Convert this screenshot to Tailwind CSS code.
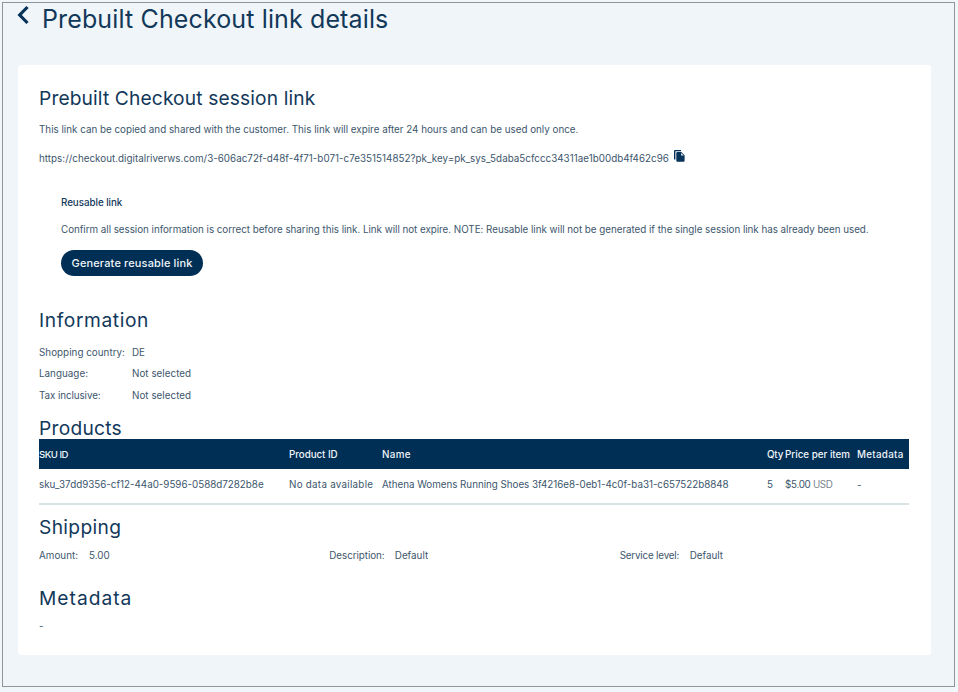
<!DOCTYPE html>
<html lang="en">
<head>
<meta charset="utf-8">
<title>Prebuilt Checkout link details</title>
<script src="https://cdn.jsdelivr.net/npm/@tailwindcss/browser@4"></script>
</head>
<body class="h-[692px] overflow-hidden bg-[#f0f6f9] pt-[2px] pl-[2px] font-['Inter',sans-serif] text-[9.8px] leading-4 text-[#3c566c]">
<div class="h-[685px] w-[953px] border border-[#8f9599] bg-[#eff5f8]">
  <header class="flex h-[62px] items-start pl-[13px] text-[#12385a]">
    <svg class="mt-[2px] h-[20px] w-[13px]" viewBox="0 0 13 20" fill="none" stroke="#073259" stroke-width="3.2"><path d="M11.500 2 3.700 10l7.800 8"/></svg>
    <h1 class="ml-[13px] h-8 text-[25px] leading-8 tracking-[0.13px] whitespace-nowrap">Prebuilt Checkout link details</h1>
  </header>
  <main class="ml-[15px] flex h-[590px] w-[913px] flex-col rounded-[3px] bg-white px-[21px] pt-[19px] whitespace-nowrap">
    <h2 class="h-7 text-[19.2px] leading-7 tracking-[0.13px] text-[#12385a]">Prebuilt Checkout session link</h2>
    <p class="mt-[10px] tracking-[0.01px]">This link can be copied and shared with the customer. This link will expire after 24 hours and can be used only once.</p>
    <div class="mt-[13px] flex h-4 items-start">
      <span class="w-[635px] tracking-[0.03px]">https://checkout.digitalriverws.com/3-606ac72f-d48f-4f71-b071-c7e351514852?pk_key=pk_sys_5daba5cfccc34311ae1b00db4f462c96</span>
      <svg class="-mt-px h-[12px] w-[11px]" viewBox="0 0 11 12" fill="#073259"><path d="M0 1a1 1 0 0 1 1-1h6v1.200H1.400V9.500H0z"/><path d="M2.300 3a1 1 0 0 1 1-1h4l3.300 3.300V10.800a1 1 0 0 1-1 1H3.300a1 1 0 0 1-1-1z"/><path fill="#fff" d="M7.200 3v2.500h2.500z"/></svg>
    </div>
    <section class="mt-7 flex flex-col items-start pl-[22px]">
      <h3 class="font-medium tracking-[-0.05px] text-[#12385a]">Reusable link</h3>
      <p class="mt-[11px] tracking-[-0.024px]">Confirm all session information is correct before sharing this link. Link will not expire. NOTE: Reusable link will not be generated if the single session link has already been used.</p>
      <button class="mt-[12px] h-[26px] w-[142px] rounded-full bg-[#002f56] text-[11px] font-medium tracking-[0.14px] text-[#f0f5f8]">Generate reusable link</button>
    </section>
    <h2 class="mt-[30px] h-7 text-[19.2px] leading-7 tracking-[0.6px] text-[#12385a]">Information</h2>
    <dl class="mt-[7.5px] grid grid-cols-[93px_1fr] leading-[21.5px]">
      <dt class="tracking-[0.04px]">Shopping country:</dt><dd>DE</dd>
      <dt class="tracking-[0.04px]">Language:</dt><dd class="tracking-[0.04px]">Not selected</dd>
      <dt class="tracking-[-0.07px]">Tax inclusive:</dt><dd class="tracking-[0.04px]">Not selected</dd>
    </dl>
    <h2 class="mt-[11px] h-[22px] text-[19.2px] leading-[22px] tracking-[0.25px] text-[#12385a]">Products</h2>
    <table class="w-[870px] table-fixed border-collapse text-left">
      <colgroup><col class="w-[250px]"><col class="w-[93px]"><col class="w-[385px]"><col class="w-[18px]"><col class="w-[72px]"><col class="w-[52px]"></colgroup>
      <thead class="bg-[#002f56] text-[#f0f5f8]">
        <tr class="h-[29.5px]">
          <th class="p-0 pt-[2px] text-[9.6px] font-medium tracking-[-0.5px]">SKU ID</th>
          <th class="p-0 pt-[2px] font-medium tracking-[-0.05px]">Product ID</th>
          <th class="p-0 pt-[2px] font-medium tracking-[0.4px]">Name</th>
          <th class="p-0 pt-[2px] font-medium tracking-[-0.2px]">Qty</th>
          <th class="p-0 pt-[2px] font-medium">Price per item</th>
          <th class="p-0 pt-[2px] font-medium tracking-[0.3px]">Metadata</th>
        </tr>
      </thead>
      <tbody>
        <tr class="h-[35.5px] border-b-2 border-[#dbe2e5]">
          <td class="p-0 pb-[2px]">sku_37dd9356-cf12-44a0-9596-0588d7282b8e</td>
          <td class="p-0 pb-[2px] tracking-[0.27px]">No data available</td>
          <td class="p-0 pb-[2px] tracking-[-0.02px]">Athena Womens Running Shoes 3f4216e8-0eb1-4c0f-ba31-c657522b8848</td>
          <td class="p-0 pb-[2px]">5</td>
          <td class="p-0 pb-[2px] tracking-[-0.3px]">$5.00 <span class="text-[#7d858c]">USD</span></td>
          <td class="p-0"><span class="block">-</span></td>
        </tr>
      </tbody>
    </table>
    <h2 class="mt-2 h-7 text-[19.2px] leading-7 tracking-[0.35px] text-[#12385a]">Shipping</h2>
    <div class="mt-[7px] grid grid-cols-3">
      <div class="flex"><span class="w-[50px] tracking-[0.05px]">Amount:</span><span>5.00</span></div>
      <div class="flex"><span class="w-[65.5px] tracking-[-0.05px]">Description:</span><span>Default</span></div>
      <div class="flex"><span class="w-[70px] tracking-[-0.17px]">Service level:</span><span>Default</span></div>
    </div>
    <h2 class="mt-[20px] h-7 text-[19.2px] leading-7 tracking-[1px] text-[#12385a]">Metadata</h2>
    <p class="mt-[7px]">-</p>
  </main>
</div>
</body>
</html>
